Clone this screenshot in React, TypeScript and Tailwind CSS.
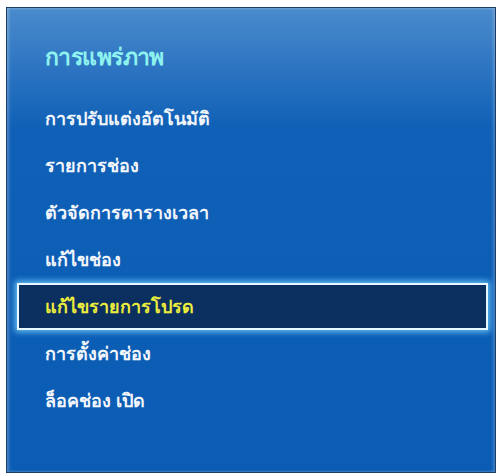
const items = [
  "การปรับแต่งอัตโนมัติ",
  "รายการช่อง",
  "ตัวจัดการตารางเวลา",
  "แก้ไขช่อง",
  "แก้ไขรายการโปรด",
  "การตั้งค่าช่อง",
  "ล็อคช่อง เปิด",
];

const selected = 4;

export default function App() {
  return (
    <div
      className="w-[501px] h-[476px] bg-white pl-[6px] pt-[7px]"
      style={{ fontFamily: '"Noto Sans", "DejaVu Sans", Tahoma, sans-serif' }}
    >
      <div className="w-[490px] h-[466px] border border-[#1d3d66] bg-[linear-gradient(180deg,#4a8bcc_0%,#2f76c2_12%,#0f60b6_26%,#0a5cb4_100%)] shadow-[inset_2px_0_3px_rgba(255,255,255,0.25),inset_-2px_0_3px_rgba(255,255,255,0.2)] pt-[26px]">
        <div className="h-[44px] flex items-center pl-[38px] text-[23px] font-bold text-[#8ef2ef] tracking-tight">
          การแพร่ภาพ
        </div>
        <div className="pt-[17px] flex flex-col">
          {items.map((label, i) =>
            i === selected ? (
              <div
                key={label}
                className="h-[47px] ml-[10px] mr-[7px] flex items-center pl-[26px] bg-[#0b2f5f] border-2 border-[#e8f8ff] shadow-[0_0_6px_2px_rgba(120,210,255,0.85)] text-[18px] font-bold text-[#ecec3c]"
              >
                {label}
              </div>
            ) : (
              <div
                key={label}
                className="h-[47px] flex items-center pl-[38px] text-[18px] font-bold text-[#f2f6fb]"
              >
                {label}
              </div>
            )
          )}
        </div>
      </div>
    </div>
  );
}
